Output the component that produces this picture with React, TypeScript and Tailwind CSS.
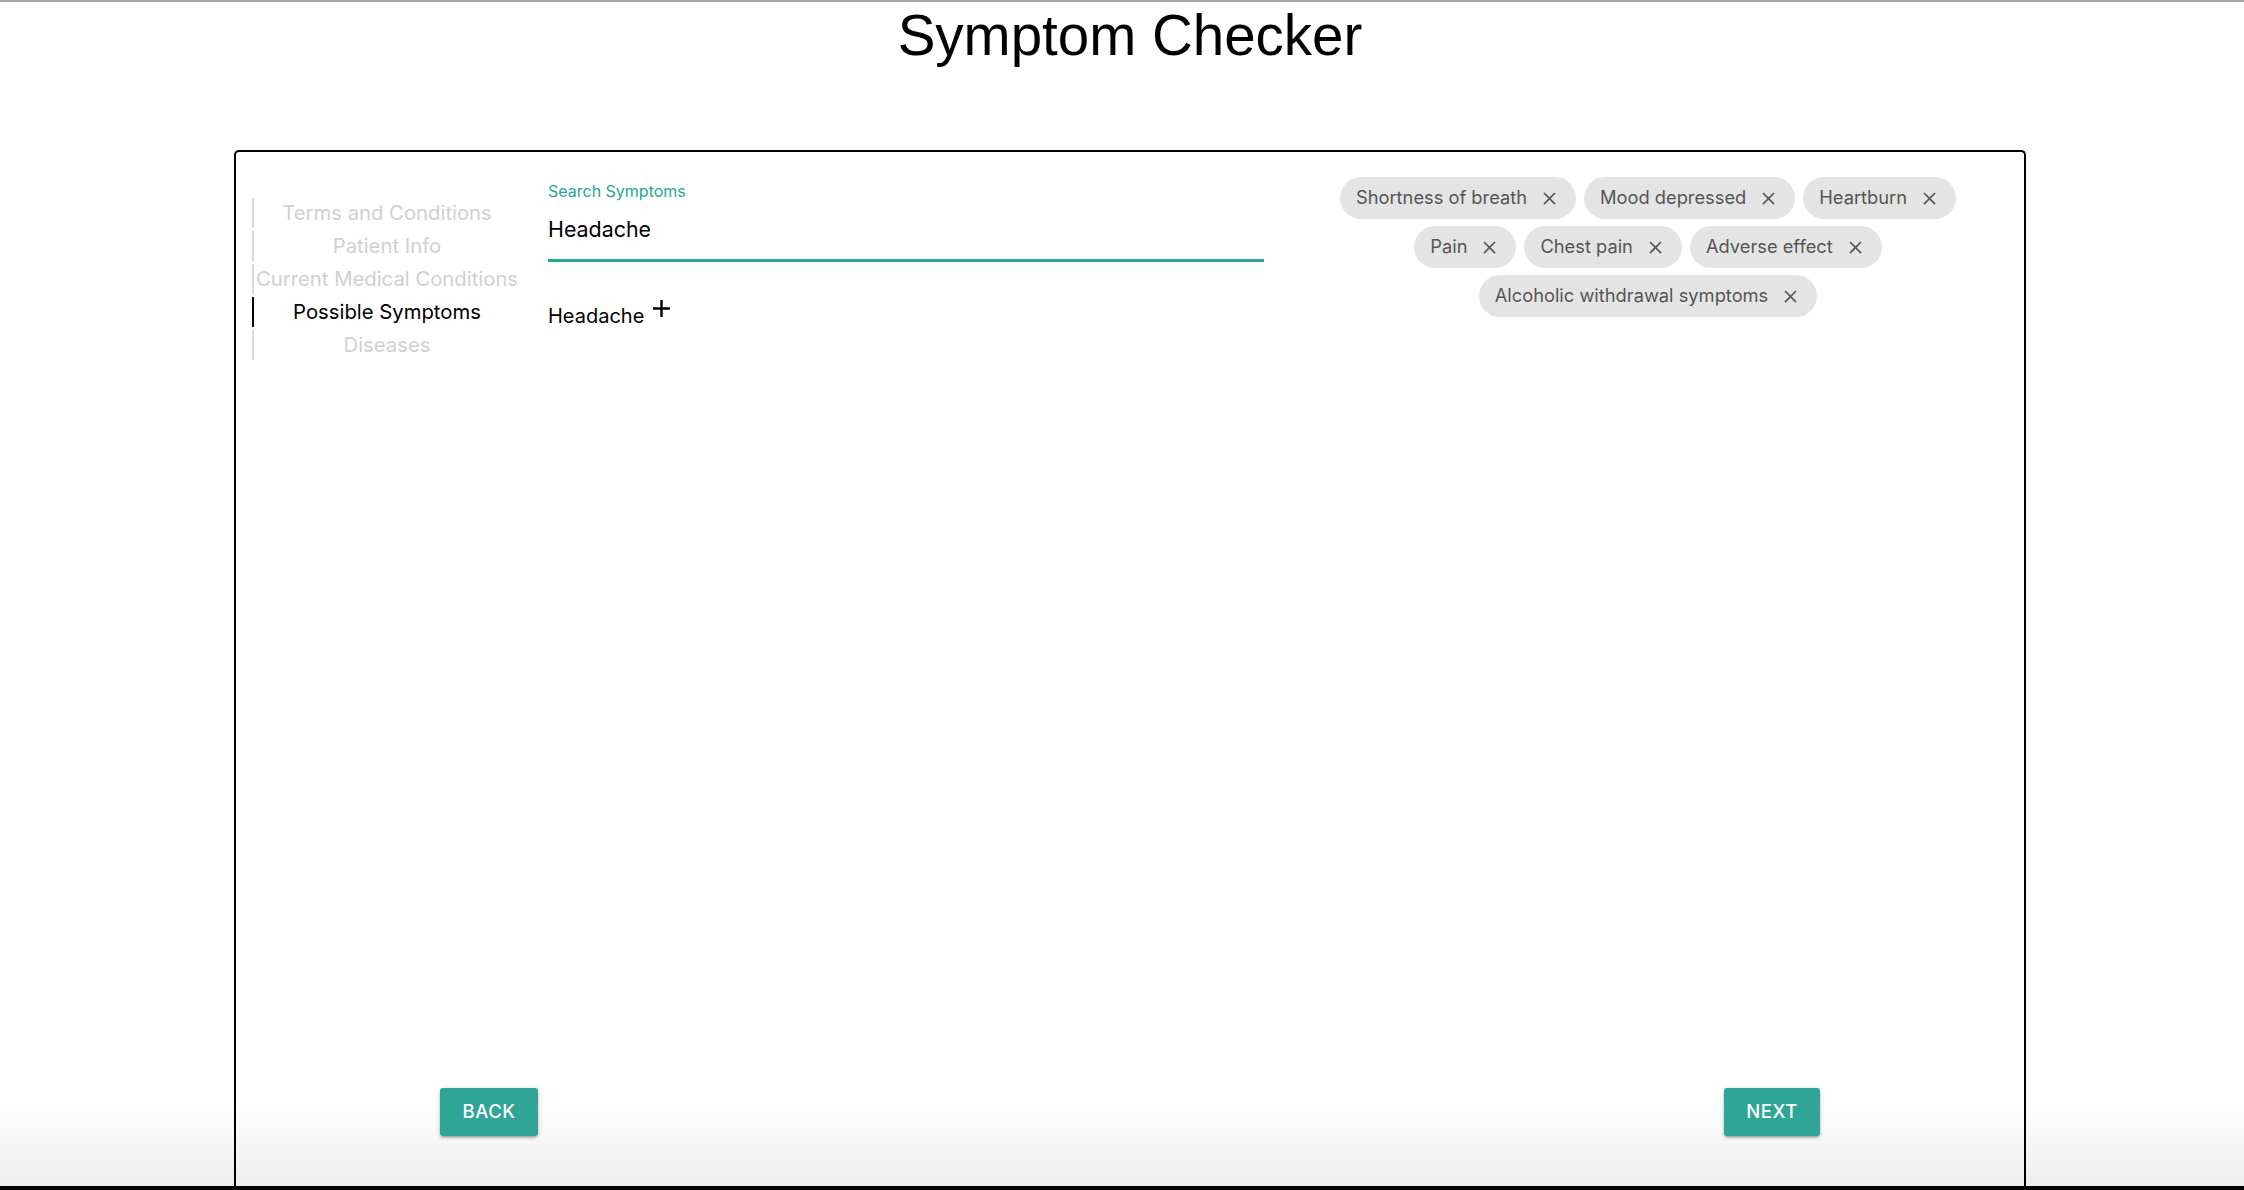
import React from "react";

const STEPS = [
  { label: "Terms and Conditions", active: false },
  { label: "Patient Info", active: false },
  { label: "Current Medical Conditions", active: false },
  { label: "Possible Symptoms", active: true },
  { label: "Diseases", active: false },
];

const CHIPS = [
  "Shortness of breath",
  "Mood depressed",
  "Heartburn",
  "Pain",
  "Chest pain",
  "Adverse effect",
  "Alcoholic withdrawal symptoms",
];

function CloseIcon() {
  return (
    <svg viewBox="0 0 24 24" className="w-[21px] h-[21px] fill-[#5a5a5a]">
      <path d="M19 6.41L17.59 5 12 10.59 6.41 5 5 6.41 10.59 12 5 17.59 6.41 19 12 13.41 17.59 19 19 17.59 13.41 12z" />
    </svg>
  );
}

function PlusIcon() {
  return (
    <svg viewBox="0 0 24 24" className="w-[29px] h-[29px] fill-black">
      <path d="M19 13h-6v6h-2v-6H5v-2h6V5h2v6h6v2z" />
    </svg>
  );
}

const btn =
  "h-[48px] rounded-[3px] bg-[#2ea596] text-white text-[18.5px] font-medium tracking-[0.5px] shadow-[0_2px_2px_rgba(0,0,0,0.14),0_3px_1px_-2px_rgba(0,0,0,0.12),0_1px_5px_rgba(0,0,0,0.2)]";

export default function App() {
  return (
    <div className="relative h-[1190px] flex flex-col overflow-hidden font-[family-name:Inter,sans-serif] bg-[linear-gradient(to_bottom,#ffffff_1100px,#eeeeee_1186px)]">
      <div className="h-[2px] bg-[#a3a3a3]" />
      <h1 className="pt-[2px] pl-[16px] text-center text-[56.5px] leading-[64px] font-normal text-black font-[family-name:'Liberation_Sans',Arial,sans-serif]">
        Symptom Checker
      </h1>

      {/* card */}
      <div className="mt-[82px] ml-[234px] mr-[218px] flex-1 flex flex-col border-2 border-b-0 border-black rounded-t-[5px]">
        <div className="flex items-start pt-[25px] pl-[16px]">
          {/* stepper */}
          <div className="w-[268px] mt-[21px] flex flex-col gap-[3px]">
            {STEPS.map((s) => (
              <div
                key={s.label}
                className={`h-[30px] flex items-center justify-center border-l-2 text-[20.3px] whitespace-nowrap ${
                  s.active ? "border-black text-black" : "border-[#d6d6d6] text-[#d0d0d0]"
                }`}
              >
                {s.label}
              </div>
            ))}
          </div>

          {/* search */}
          <div className="ml-[28px] w-[716px]">
            <label className="block mt-[4px] text-[16px] leading-[20px] text-[#26a69a]">
              Search Symptoms
            </label>
            <div className="h-[61px] pb-[2px] flex items-center border-b-[3px] border-[#26a69a] text-[21.4px] text-black">
              Headache
            </div>
            <div className="mt-[38px] flex items-start">
              <span className="text-[20px] leading-[24px] pt-[4px] text-black">Headache</span>
              <span className="-mt-[6px] ml-[3px]">
                <PlusIcon />
              </span>
            </div>
          </div>

          {/* selected symptoms */}
          <div className="ml-[26px] w-[716px] flex flex-wrap justify-center gap-x-[8px] gap-y-[7px]">
            {CHIPS.map((c) => (
              <div
                key={c}
                className="h-[42px] flex items-center rounded-full bg-[#e4e4e4] pl-[16px] pr-[16px] text-[18.3px] text-[#555555]"
              >
                <span>{c}</span>
                <span className="ml-[12px]">
                  <CloseIcon />
                </span>
              </div>
            ))}
          </div>
        </div>

        <div className="mt-auto flex justify-between px-[204px] pb-[50px]">
          <button className={`w-[98px] ${btn}`}>BACK</button>
          <button className={`w-[96px] ${btn}`}>NEXT</button>
        </div>
      </div>
      <div className="h-[4px] bg-black" />
    </div>
  );
}
